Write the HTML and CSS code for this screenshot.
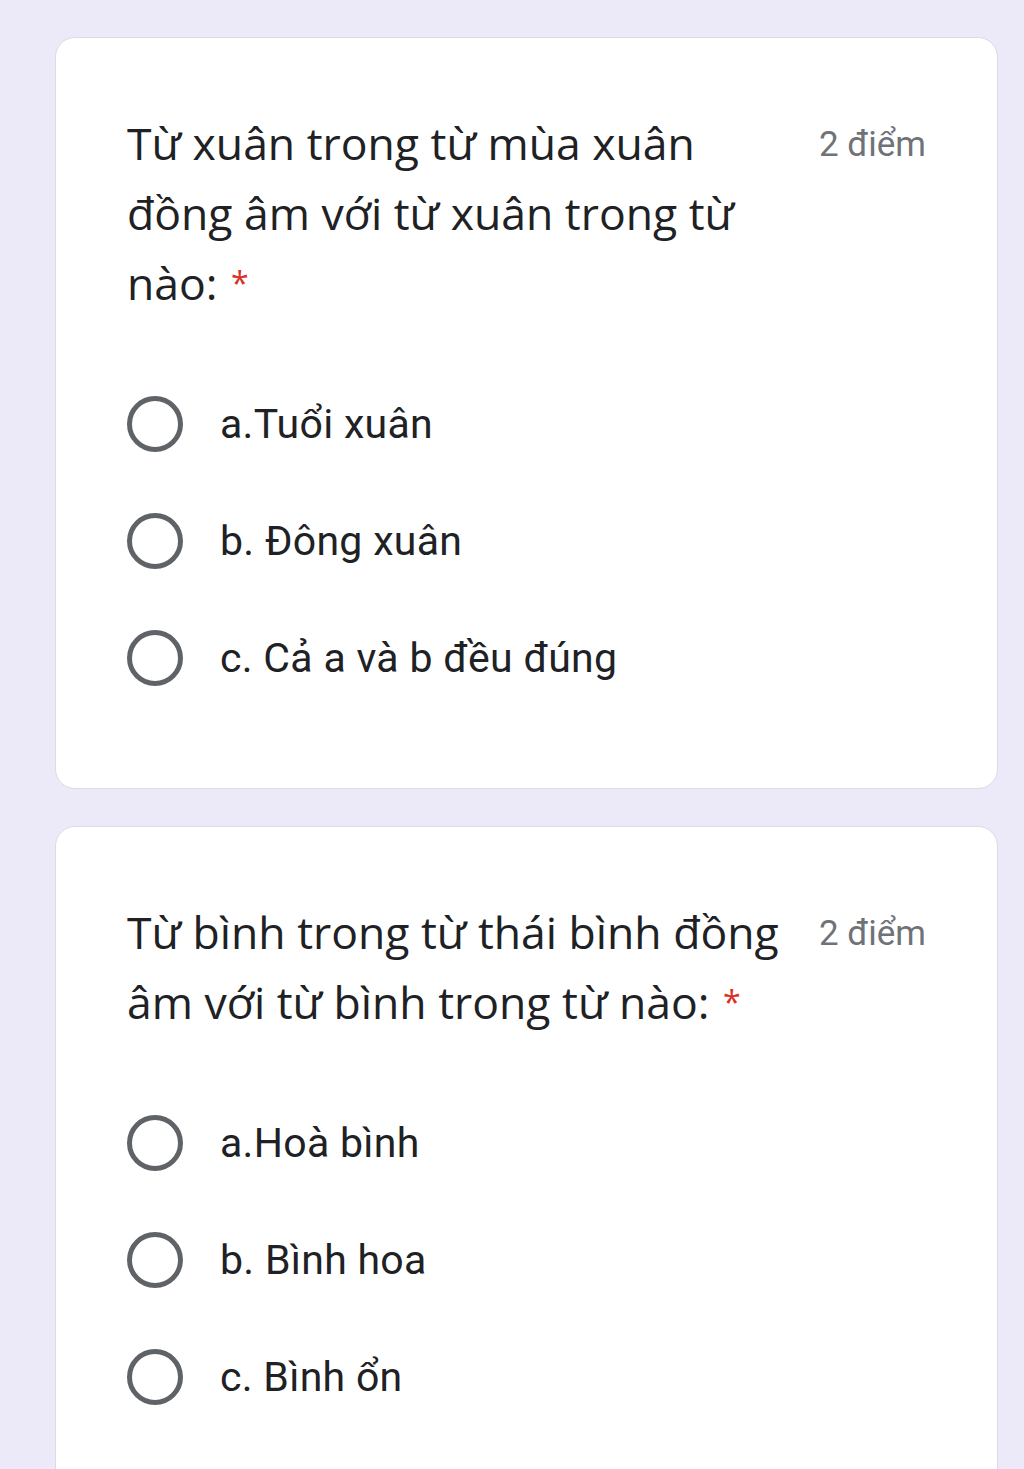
FILE: index.html
```html
<!DOCTYPE html>
<html lang="vi">
<head>
  <meta charset="utf-8">
  <title>Câu hỏi</title>
  <link rel="stylesheet" href="styles.css">
</head>
<body>
  <div class="form">
    <div class="card">
      <div class="card-head">
        <div class="title">Từ xuân trong từ mùa xuân đồng âm với từ xuân trong từ nào: <span class="req">*</span></div>
        <div class="points">2 điểm</div>
      </div>
      <div class="options">
        <label class="option"><span class="radio"></span><span class="option-text">a.Tuổi xuân</span></label>
        <label class="option"><span class="radio"></span><span class="option-text">b. Đông xuân</span></label>
        <label class="option"><span class="radio"></span><span class="option-text">c. Cả a và b đều đúng</span></label>
      </div>
    </div>

    <div class="card">
      <div class="card-head">
        <div class="title">Từ bình trong từ thái bình đồng âm với từ bình trong từ nào: <span class="req">*</span></div>
        <div class="points">2 điểm</div>
      </div>
      <div class="options">
        <label class="option"><span class="radio"></span><span class="option-text">a.Hoà bình</span></label>
        <label class="option"><span class="radio"></span><span class="option-text">b. Bình hoa</span></label>
        <label class="option"><span class="radio"></span><span class="option-text">c. Bình ổn</span></label>
      </div>
    </div>
  </div>
</body>
</html>
```

FILE: styles.css
```css
body {
  margin: 0;
  background-color: #ece9f8;
  font-family: Roboto, "Noto Sans", sans-serif;
  color: #202124;
}

.form {
  padding: 37px 26px 40px 55px;
}

.card {
  background-color: #fff;
  border: 1px solid #dcdbe4;
  border-radius: 20px;
  padding: 70px 71px 72px 71px;
  margin-bottom: 37px;
}

.card-head {
  display: flex;
  align-items: flex-start;
}

.title {
  flex: 0 0 664px;
  font-family: "Open Sans", "Noto Sans", sans-serif;
  font-size: 44.5px;
  line-height: 70px;
  color: #202124;
}

.req {
  color: #d93025;
  font-size: 32px;
  vertical-align: 5px;
  margin-left: 2px;
}

.points {
  margin-left: auto;
  padding-top: 2px;
  font-family: Roboto, sans-serif;
  font-size: 35px;
  line-height: 70px;
  color: #6f7378;
  white-space: nowrap;
}

.options {
  margin-top: 47px;
}

.option {
  display: flex;
  align-items: center;
  height: 117px;
}

.radio {
  box-sizing: border-box;
  width: 56px;
  height: 56px;
  border: 5px solid #5f6368;
  border-radius: 50%;
  margin-right: 37px;
  flex-shrink: 0;
}

.option-text {
  font-size: 41px;
  letter-spacing: 0.3px;
  color: #202124;
}
```
